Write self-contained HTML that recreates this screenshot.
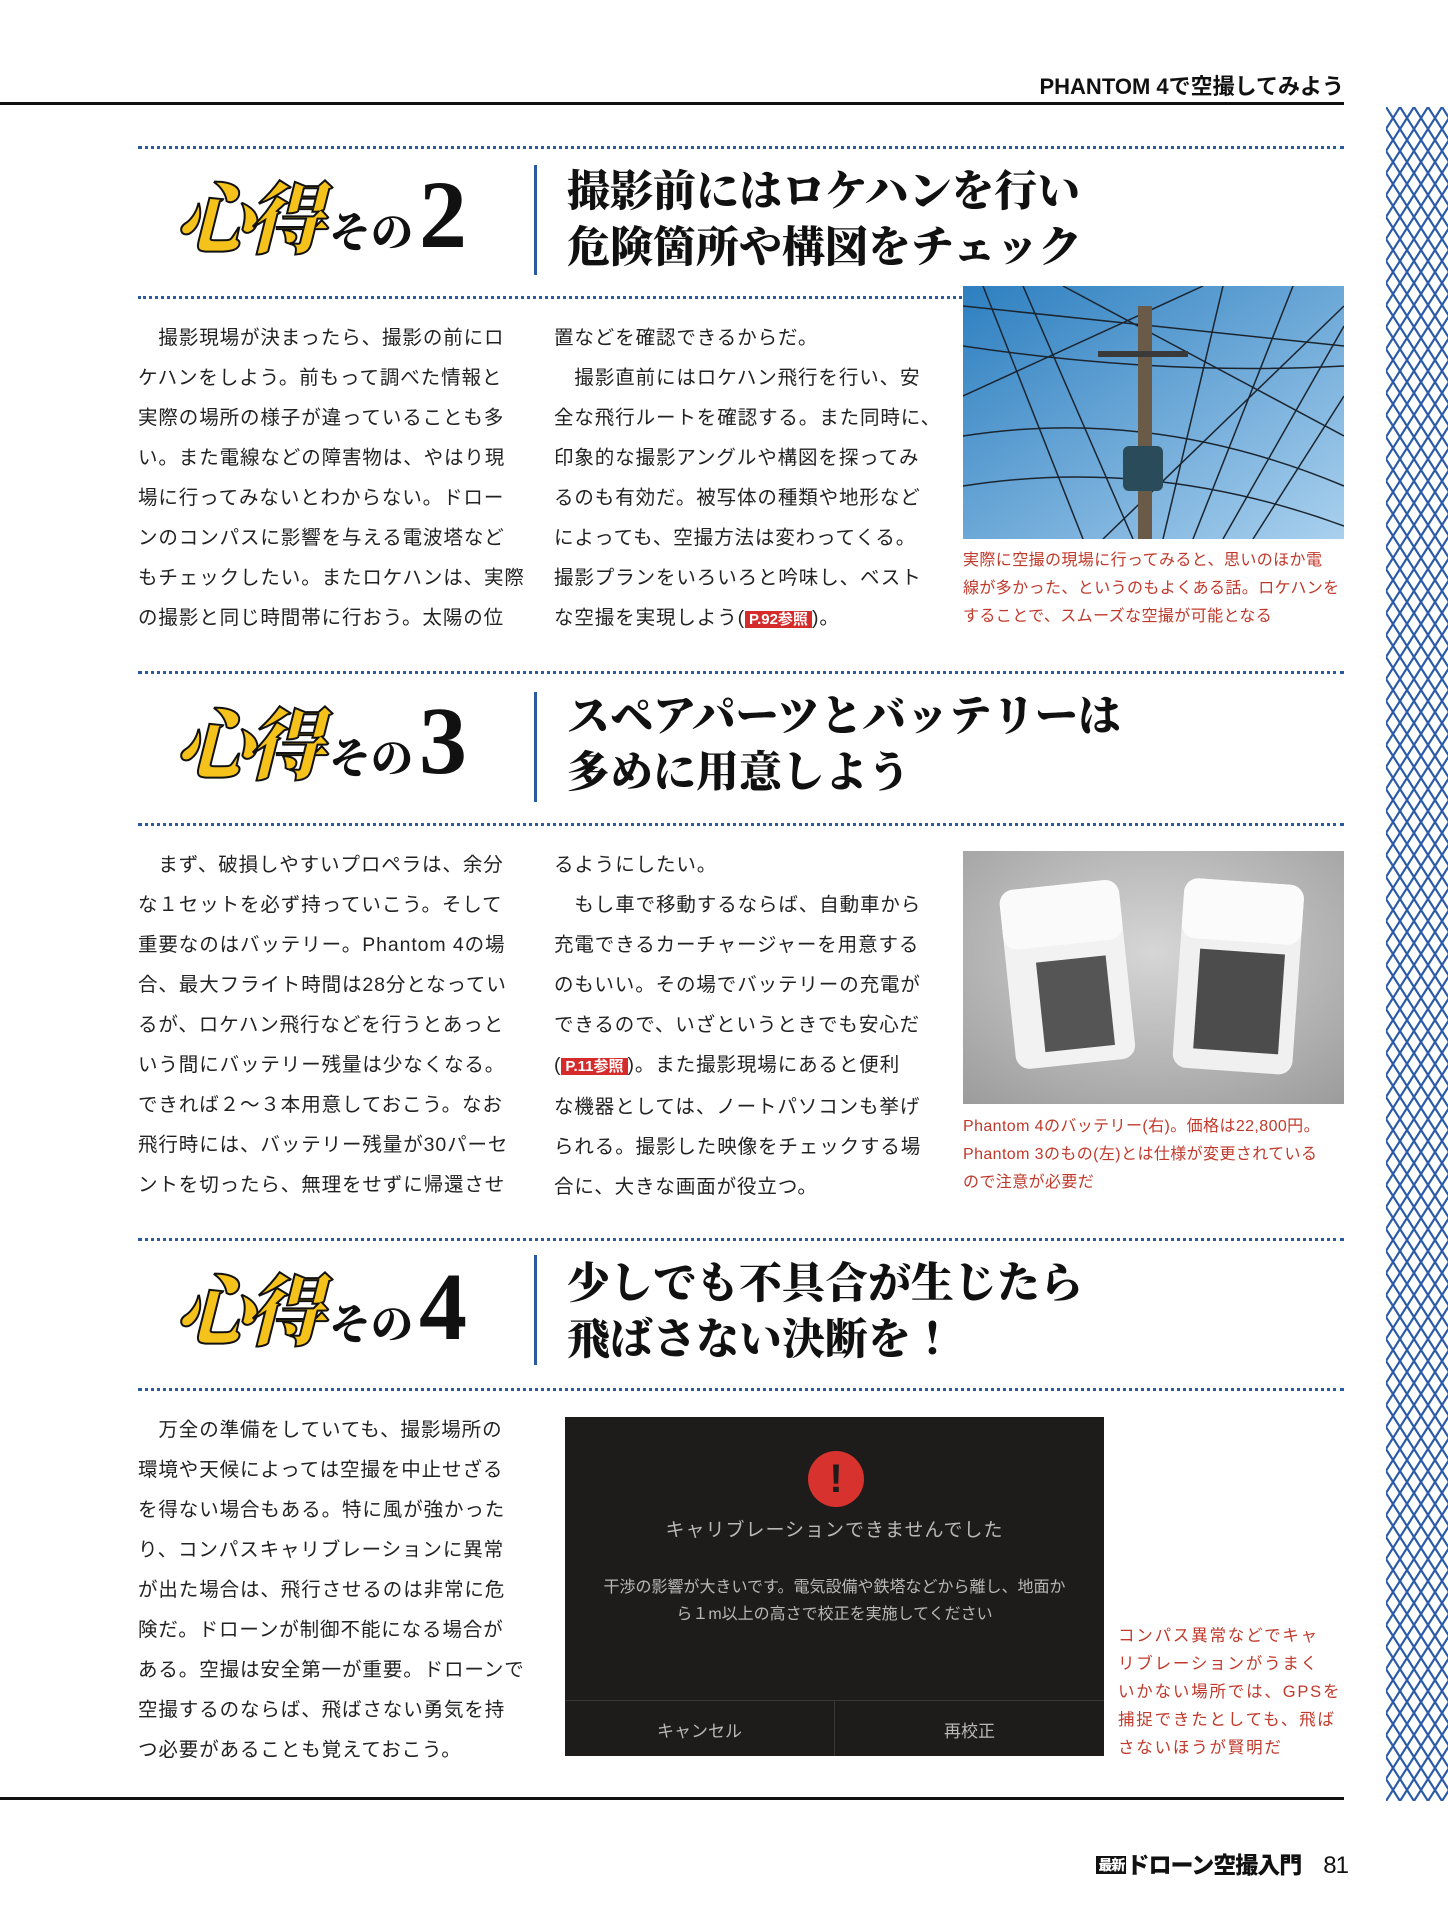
<!DOCTYPE html>
<html><head><meta charset="utf-8"><style>
*{margin:0;padding:0;box-sizing:border-box}
body{width:1448px;height:1920px;position:relative;background:#fff;overflow:hidden;font-family:"Liberation Sans","Noto Sans CJK JP",sans-serif;color:#222}
.a{position:absolute}
.dot{position:absolute;height:0;border-top:3px dotted #2a5aa0}
.vl{position:absolute;width:3px;background:#2a5aa0}
.ttl{position:absolute;left:567px;font-family:"Liberation Serif","Noto Serif CJK JP",serif;font-weight:900;font-size:43px;line-height:56px;color:#111;letter-spacing:0}
.kok{position:absolute;left:175px;white-space:nowrap;font-family:"Liberation Serif","Noto Serif CJK JP",serif;font-weight:900}
.kok .k{font-size:78px;color:#f4c21a;-webkit-text-stroke:2px #111;font-style:italic;letter-spacing:-6px}
.kok .s{font-size:42px;color:#111;margin-left:10px}
.kok .n{font-size:96px;color:#111;margin-left:6px}
.col{position:absolute;font-size:19.5px;line-height:40px;letter-spacing:0.9px;color:#222;white-space:nowrap}
.cap{position:absolute;color:#c0392b;font-size:16px;line-height:28px;letter-spacing:.4px;white-space:nowrap}
.ref{background:#d52b2b;color:#fff;font-size:15px;padding:0 4px;font-weight:bold;letter-spacing:0}
</style></head><body>
<div class="a" style="right:104px;top:69px;font-size:22px;font-weight:bold;color:#111">PHANTOM 4で空撮してみよう</div>
<div class="a" style="left:0;top:102px;width:1344px;height:3px;background:#111"></div>
<svg class="a" style="left:1386px;top:107px" width="62" height="1694">
<defs><pattern id="p" width="14" height="22" patternUnits="userSpaceOnUse"><path d="M0 0L14 22M14 0L0 22" stroke="#2a5aa8" stroke-width="2.2" fill="none"/></pattern></defs>
<rect width="62" height="1694" fill="url(#p)"/></svg>

<!-- section 2 -->
<div class="dot" style="left:138px;top:146px;width:1206px"></div>
<div class="kok" style="top:158px"><span class="k">心得</span><span class="s">その</span><span class="n">2</span></div>
<div class="vl" style="left:534px;top:165px;height:110px"></div>
<div class="ttl" style="top:165px">撮影前にはロケハンを行い<br>危険箇所や構図をチェック</div>
<div class="dot" style="left:138px;top:296px;width:824px"></div>
<svg class="a" style="left:963px;top:286px" width="381" height="253">
<defs><linearGradient id="sky" x1="0" y1="0" x2="1" y2="1"><stop offset="0" stop-color="#2d7fc0"/><stop offset="1" stop-color="#a9d0ee"/></linearGradient></defs>
<rect width="381" height="253" fill="url(#sky)"/>
<g stroke="#1b2530" stroke-width="1.5" fill="none">
<path d="M0 20 Q190 40 381 60"/><path d="M0 60 Q200 90 381 80"/><path d="M20 0 L120 253"/><path d="M60 0 L170 253"/><path d="M260 0 L200 253"/><path d="M330 0 L230 253"/><path d="M381 40 L260 253"/><path d="M381 110 L290 253"/><path d="M0 150 Q190 120 381 200"/><path d="M0 200 Q190 170 381 240"/><path d="M100 0 L381 150"/><path d="M0 110 L240 0"/><path d="M381 20 L140 253"/>
</g>
<rect x="175" y="20" width="14" height="233" fill="#6a5a48"/>
<rect x="135" y="65" width="90" height="6" fill="#3a3a3a"/>
<rect x="160" y="160" width="40" height="45" rx="6" fill="#2a4c5a"/>
</svg>
<div class="col" style="left:138px;top:318px">　撮影現場が決まったら、撮影の前にロ<br>ケハンをしよう。前もって調べた情報と<br>実際の場所の様子が違っていることも多<br>い。また電線などの障害物は、やはり現<br>場に行ってみないとわからない。ドロー<br>ンのコンパスに影響を与える電波塔など<br>もチェックしたい。またロケハンは、実際<br>の撮影と同じ時間帯に行おう。太陽の位</div>
<div class="col" style="left:554px;top:318px">置などを確認できるからだ。<br>　撮影直前にはロケハン飛行を行い、安<br>全な飛行ルートを確認する。また同時に、<br>印象的な撮影アングルや構図を探ってみ<br>るのも有効だ。被写体の種類や地形など<br>によっても、空撮方法は変わってくる。<br>撮影プランをいろいろと吟味し、ベスト<br>な空撮を実現しよう(<span class="ref">P.92参照</span>)。</div>
<div class="cap" style="left:963px;top:547px">実際に空撮の現場に行ってみると、思いのほか電<br>線が多かった、というのもよくある話。ロケハンを<br>することで、スムーズな空撮が可能となる</div>

<!-- section 3 -->
<div class="dot" style="left:138px;top:671px;width:1206px"></div>
<div class="kok" style="top:684px"><span class="k">心得</span><span class="s">その</span><span class="n">3</span></div>
<div class="vl" style="left:534px;top:692px;height:110px"></div>
<div class="ttl" style="top:690px">スペアパーツとバッテリーは<br>多めに用意しよう</div>
<div class="dot" style="left:138px;top:823px;width:1206px"></div>
<svg class="a" style="left:963px;top:851px" width="381" height="253">
<defs><radialGradient id="g" cx=".5" cy=".4" r=".8"><stop offset="0" stop-color="#d6d6d6"/><stop offset="1" stop-color="#9a9a9a"/></radialGradient></defs>
<rect width="381" height="253" fill="url(#g)"/>
<g transform="rotate(-6 90 130)"><rect x="45" y="35" width="120" height="180" rx="14" fill="#f2f2f2"/><rect x="75" y="110" width="70" height="90" fill="#555"/><rect x="45" y="35" width="120" height="60" rx="14" fill="#fafafa"/></g>
<g transform="rotate(4 270 130)"><rect x="215" y="30" width="120" height="190" rx="14" fill="#f0f0f0"/><rect x="235" y="100" width="85" height="100" fill="#4c4c4c"/><rect x="215" y="30" width="120" height="60" rx="14" fill="#fbfbfb"/></g>
</svg>
<div class="col" style="left:138px;top:845px">　まず、破損しやすいプロペラは、余分<br>な１セットを必ず持っていこう。そして<br>重要なのはバッテリー。Phantom 4の場<br>合、最大フライト時間は28分となってい<br>るが、ロケハン飛行などを行うとあっと<br>いう間にバッテリー残量は少なくなる。<br>できれば２～３本用意しておこう。なお<br>飛行時には、バッテリー残量が30パーセ<br>ントを切ったら、無理をせずに帰還させ</div>
<div class="col" style="left:554px;top:845px">るようにしたい。<br>　もし車で移動するならば、自動車から<br>充電できるカーチャージャーを用意する<br>のもいい。その場でバッテリーの充電が<br>できるので、いざというときでも安心だ<br>(<span class="ref">P.11参照</span>)。また撮影現場にあると便利<br>な機器としては、ノートパソコンも挙げ<br>られる。撮影した映像をチェックする場<br>合に、大きな画面が役立つ。</div>
<div class="cap" style="left:963px;top:1113px">Phantom 4のバッテリー(右)。価格は22,800円。<br>Phantom 3のもの(左)とは仕様が変更されている<br>ので注意が必要だ</div>

<!-- section 4 -->
<div class="dot" style="left:138px;top:1238px;width:1206px"></div>
<div class="kok" style="top:1250px"><span class="k">心得</span><span class="s">その</span><span class="n">4</span></div>
<div class="vl" style="left:534px;top:1255px;height:110px"></div>
<div class="ttl" style="top:1257px">少しでも不具合が生じたら<br>飛ばさない決断を！</div>
<div class="dot" style="left:138px;top:1388px;width:1206px"></div>
<div class="col" style="left:138px;top:1410px">　万全の準備をしていても、撮影場所の<br>環境や天候によっては空撮を中止せざる<br>を得ない場合もある。特に風が強かった<br>り、コンパスキャリブレーションに異常<br>が出た場合は、飛行させるのは非常に危<br>険だ。ドローンが制御不能になる場合が<br>ある。空撮は安全第一が重要。ドローンで<br>空撮するのならば、飛ばさない勇気を持<br>つ必要があることも覚えておこう。</div>
<div class="a" style="left:565px;top:1417px;width:539px;height:339px;background:#1e1c1a;color:#b8b8b8;text-align:center">
<div class="a" style="left:243px;top:34px;width:56px;height:56px;border-radius:50%;background:#d7322e;color:#1e1c1a;font-size:40px;font-weight:bold;line-height:56px">!</div>
<div class="a" style="left:0;top:98px;width:539px;font-size:19px;letter-spacing:1px">キャリブレーションできませんでした</div>
<div class="a" style="left:0;top:157px;width:539px;font-size:16px;line-height:27px">干渉の影響が大きいです。電気設備や鉄塔などから離し、地面か<br>ら１m以上の高さで校正を実施してください</div>
<div class="a" style="left:0;top:283px;width:539px;height:1px;background:#3a3836"></div>
<div class="a" style="left:269px;top:284px;width:1px;height:55px;background:#3a3836"></div>
<div class="a" style="left:0;top:300px;width:269px;font-size:17px">キャンセル</div>
<div class="a" style="left:270px;top:300px;width:269px;font-size:17px">再校正</div>
</div>
<div class="cap" style="left:1118px;top:1622px;font-size:16.5px;letter-spacing:1.8px">コンパス異常などでキャ<br>リブレーションがうまく<br>いかない場所では、GPSを<br>捕捉できたとしても、飛ば<br>さないほうが賢明だ</div>

<div class="a" style="left:0;top:1797px;width:1344px;height:3px;background:#111"></div>
<div class="a" style="right:100px;top:1846px;font-size:23px;font-weight:900;color:#111;letter-spacing:-1px"><span style="background:#111;color:#fff;font-size:14px;padding:1px 2px;vertical-align:3px">最新</span>ドローン空撮入門<span style="font-weight:normal;margin-left:22px;font-size:24px">81</span></div>
</body></html>
